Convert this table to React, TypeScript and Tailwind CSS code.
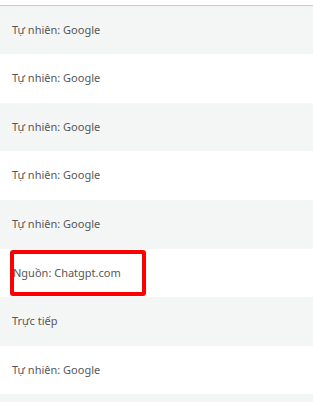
import React from "react";

const rows: { text: string; h: string; gray: boolean; box?: boolean }[] = [
  { text: "Tự nhiên: Google", h: "h-[48px]", gray: true },
  { text: "Tự nhiên: Google", h: "h-[49px]", gray: false },
  { text: "Tự nhiên: Google", h: "h-[48px]", gray: true },
  { text: "Tự nhiên: Google", h: "h-[49px]", gray: false },
  { text: "Tự nhiên: Google", h: "h-[49px]", gray: true },
  { text: "Nguồn: Chatgpt.com", h: "h-[48px]", gray: false, box: true },
  { text: "Trực tiếp", h: "h-[49px]", gray: true },
  { text: "Tự nhiên: Google", h: "h-[48px]", gray: false },
  { text: "", h: "h-[48px]", gray: true },
];

export default function App() {
  return (
    <div
      className="w-[313px] h-[402px] overflow-hidden bg-white"
      style={{ fontFamily: '"Noto Sans", "Open Sans", sans-serif' }}
    >
      <div className="h-[5px] bg-white" />
      <div className="h-px bg-[#c8c8c8]" />
      {rows.map((r, i) => (
        <div
          key={i}
          className={`relative flex items-center pl-[12px] text-[11px] text-[#575757] ${r.h} ${
            r.gray ? "bg-[#f4f5f5]" : "bg-white"
          }`}
        >
          <span className={r.box ? "pl-[1px]" : ""}>{r.text}</span>
          {r.box && (
            <div className="absolute left-[10px] top-[1px] w-[136px] h-[46px] border-4 border-[#ff0000] rounded-[3px]" />
          )}
        </div>
      ))}
    </div>
  );
}
